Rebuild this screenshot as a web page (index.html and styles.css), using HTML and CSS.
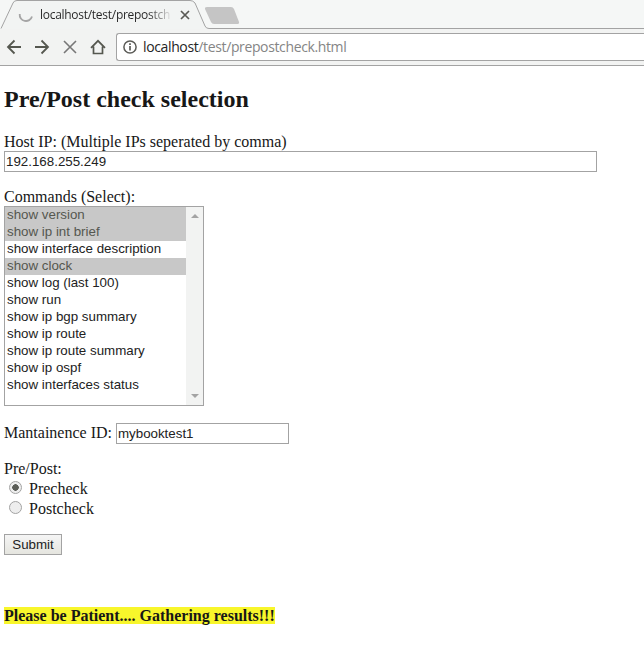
FILE: index.html
```html
<!DOCTYPE html>
<html lang="en">
<head>
<meta charset="utf-8">
<title>Pre/Post check selection</title>
<link rel="stylesheet" href="styles.css">
</head>
<body>
<header class="browser">
  <div class="tabstrip">
    <svg class="tab-shape" width="644" height="29" viewBox="0 0 644 29">
      <path d="M1 28.500L13 3Q14 .5 17 .5H190Q193 .5 195 3L205 26Q206 28.500 209 28.500H644V29H0Z" fill="#f2f4f3"/>
      <path d="M1 28.500L13 3Q14 .5 17 .5H190Q193 .5 195 3L205 26Q206 28.500 209 28.500H644" fill="none" stroke="#a3a3a3"/>
      <path d="M207 7H231Q233 7 234 9L239 22Q239.500 24 237 24H214Q212 24 211 22L205 9Q204.500 7 207 7Z" fill="#c5c5c5"/>
      <path d="M19.700 14A6.300 6.300 0 0 0 32 16.500" fill="none" stroke="#a5a5a5" stroke-width="1.800"/>
      <path d="M181 11L189 19M189 11L181 19" stroke="#5a5a55" stroke-width="1.700"/>
    </svg>
    <span class="tab-title">localhost/test/prepostch</span>
  </div>
  <div class="toolbar">
    <svg class="nav" width="116" height="36" viewBox="0 29 116 36" fill="none" stroke="#55574f" stroke-width="1.800">
      <path d="M21 47H8.500M14.500 40.500L8 47L14.500 53.500"/>
      <path d="M35 47H47.500M41.500 40.500L48 47L41.500 53.500"/>
      <path d="M64 41L76 53M76 41L64 53" stroke="#777" stroke-width="1.600"/>
      <path d="M91 47.800L98 40.800L105 47.800M93.500 46.500V53.500H102.500V46.500" stroke-width="1.700"/>
    </svg>
    <div class="address">
      <svg width="14" height="14" viewBox="0 0 14 14" fill="none" stroke="#5b5b57" stroke-width="1.500"><circle cx="7" cy="7" r="6.100"/><path d="M7 6V10.500M7 3.200V4.900" stroke-width="1.700"/></svg>
      <span class="url"><b>localhost</b>/test/prepostcheck.html</span>
    </div>
  </div>
</header>
<main>
  <h2>Pre/Post check selection</h2>
  <label class="host" for="host">Host IP: (Multiple IPs seperated by comma)</label>
  <input class="field host-field" id="host" value="192.168.255.249">
  <div class="commands-label">Commands (Select):</div>
  <div class="listbox">
    <ul>
      <li class="selected">show version</li>
      <li class="selected">show ip int brief</li>
      <li>show interface description</li>
      <li class="selected">show clock</li>
      <li>show log (last 100)</li>
      <li>show run</li>
      <li>show ip bgp summary</li>
      <li>show ip route</li>
      <li>show ip route summary</li>
      <li>show ip ospf</li>
      <li>show interfaces status</li>
    </ul>
    <div class="scrollbar"><i class="up"></i><i class="down"></i></div>
  </div>
  <div class="maintenance">
    <label for="mid">Mantainence ID:</label>
    <input class="field mid-field" id="mid" value="mybooktest1">
  </div>
  <div class="prepost">Pre/Post:</div>
  <label class="choice"><input type="radio" name="phase" checked><span>Precheck</span></label>
  <label class="choice"><input type="radio" name="phase"><span>Postcheck</span></label>
  <button>Submit</button>
  <p class="status"><mark>Please be Patient.... Gathering results!!!</mark></p>
</main>
</body>
</html>
```
FILE: styles.css
```css
* { box-sizing: border-box; }
body { margin: 0; height: 649px; overflow: hidden; background: #fff; color: #171717; font: 16px/20px "Liberation Serif", serif; }
.browser { height: 66px; border-bottom: 1px solid #a3a3a3; background: #f2f3f2; }
.tabstrip { position: relative; height: 29px; background: #f5f7f6; }
.tab-shape { display: block; }
.tab-title { position: absolute; left: 40px; top: 5px; width: 131px; overflow: hidden; white-space: nowrap; font: 12px/20px "Open Sans", sans-serif; letter-spacing: -.28px; background: linear-gradient(90deg, #252525 108px, #ddd 130px); background-clip: text; color: transparent; }
.toolbar { display: flex; height: 36px; }
.nav { flex: none; }
.address { display: flex; align-items: center; flex: 1; height: 28px; margin-top: 4px; padding-left: 6px; border: 1px solid #a3a3a3; border-right: 0; border-radius: 3px 0 0 3px; background: #fff; }
.url { margin-left: 6px; color: #858585; font: 14px/24px "Open Sans", sans-serif; letter-spacing: -.37px; white-space: nowrap; }
.url b { color: #252525; font-weight: 400; }
main { display: flex; flex-direction: column; align-items: flex-start; padding: 19px 4px 0; }
h2 { margin: 0; height: 47px; font-size: 24px; line-height: 28px; white-space: nowrap; }
.host { height: 19px; white-space: nowrap; }
.field { height: 21px; margin: 0; padding: 0 1px; border: 1px solid #a3a3a3; border-radius: 0; color: #222; background: #fff; font: 13.333px/17px "Liberation Sans", sans-serif; }
.host-field { width: 593px; }
.commands-label { height: 19px; margin-top: 15px; }
.listbox { display: flex; width: 200px; height: 200px; border: 1px solid #a3a3a3; color: #222; font: 13.333px/15px "Liberation Sans", sans-serif; }
.listbox ul { flex: 1; margin: 0; padding: 0; list-style: none; }
.listbox li { height: 17px; padding-left: 2px; white-space: nowrap; }
.listbox .selected { background: #c8c8c8; color: #55574f; }
.scrollbar { display: flex; flex-direction: column; justify-content: space-between; align-items: center; width: 17px; padding: 7px 0; background: #f2f3f2; }
.up, .down { border: 4px solid transparent; }
.up { border-top: 0; border-bottom-color: #a3a3a3; }
.down { border-bottom: 0; border-top-color: #a3a3a3; }
.maintenance { display: flex; margin-top: 17px; height: 21px; gap: 4px; white-space: nowrap; }
.mid-field { width: 173px; }
.prepost { height: 20px; margin-top: 15px; }
.choice { display: flex; height: 20px; }
.choice input { appearance: none; width: 13px; height: 13px; margin: 2px 7px 0 5px; border: 1px solid #a3a3a3; border-radius: 50%; background: #eee; }
.choice input:checked { background: radial-gradient(circle, #5b5d57 0 3px, #eee 3.500px); }
button { width: 58px; height: 21px; margin: 15px 0 0; padding: 0; border: 1px solid #a3a3a3; background: linear-gradient(#f5f5f5, #e5e5df); color: #222; font: 13.333px/17px "Liberation Sans", sans-serif; }
.status { margin: 51px 0 0; font-weight: 700; white-space: nowrap; }
mark { background: #f8f62b; color: #171717; }
```
